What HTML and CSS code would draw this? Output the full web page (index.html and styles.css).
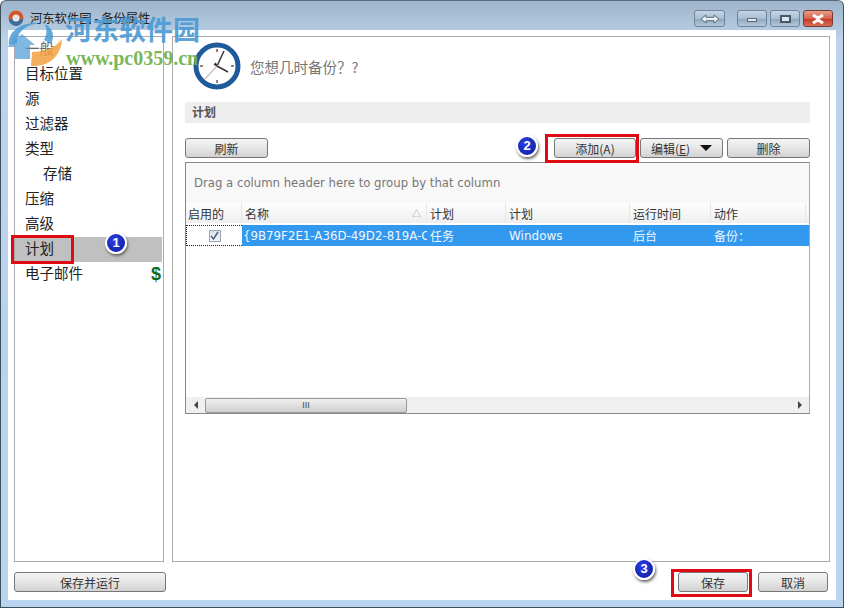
FILE: index.html
```html
<!DOCTYPE html>
<html lang="zh-CN">
<head>
  <meta charset="UTF-8">
  <title>备份属性</title>
  <link rel="stylesheet" href="styles.css">
</head>
<body>
  <div class="window">
    <div class="titlebar">
      <svg class="app-icon" width="16" height="16" viewBox="0 0 16 16">
        <circle cx="8" cy="8" r="7.5" fill="#d8542c"/>
        <path d="M1 9a7 7 0 0 0 14 0z" fill="#3d6f9c"/>
        <circle cx="8" cy="8" r="3.5" fill="#e8e8e8"/>
      </svg>
      <span class="title-text">河东软件园 - 备份属性</span>
      <span class="spacer"></span>
      <span class="cap-btn cap-nav">
        <svg width="20" height="10" viewBox="0 0 20 10"><path d="M1 5l5-4v2.300h8V1l5 4-5 4V6.700H6V9z" fill="#e8eef2" stroke="#5a6c7c"/></svg>
      </span>
      <span class="cap-btn cap-min"><i></i></span>
      <span class="cap-btn cap-max"><i></i></span>
      <span class="cap-btn cap-close">
        <svg width="14" height="10" viewBox="0 0 14 10"><path d="M2 1l5 3 5-3M2 9l5-3 5 3M7 4v2" fill="none" stroke="#fff" stroke-width="3"/></svg>
      </span>
    </div>

    <div class="client">
      <div class="panes">
        <ul class="nav">
          <li class="faded">一般</li>
          <li>目标位置</li>
          <li>源</li>
          <li>过滤器</li>
          <li>类型</li>
          <li class="sub">存储</li>
          <li>压缩</li>
          <li>高级</li>
          <li class="selected">计划</li>
          <li>电子邮件<span class="dollar">$</span></li>
        </ul>

        <div class="content">
          <div class="head">
            <svg class="clock" width="48" height="48" viewBox="0 0 48 48">
              <circle cx="24" cy="24" r="21" fill="#fff" stroke="#1f5a9a" stroke-width="5"/>
              <path d="M24 7v3M24 38v3M7 24h3M38 24h3" stroke="#6b5a55" stroke-width="1.500"/>
              <path d="M22 21l2 3 7-15M21 22l3 2 11 6" stroke="#3c3432" stroke-width="1.500" fill="none"/>
              <path d="M26 22L11 38" stroke="#a08c86" stroke-width="1"/>
            </svg>
            <span class="question">您想几时备份？?</span>
          </div>
          <div class="section">计划</div>

          <div class="toolbar">
            <button class="btn btn-wide">刷新</button>
            <span class="spacer"></span>
            <button class="btn btn-wide">添加(A)</button>
            <button class="btn btn-wide btn-drop"><span>编辑(<u>E</u>)</span><i class="caret"></i></button>
            <button class="btn btn-wide">删除</button>
          </div>

          <div class="grid">
            <div class="group-panel">Drag a column header here to group by that column</div>
            <div class="cols">
              <div class="col">启用的</div>
              <div class="col col-name">名称<span class="sort">△</span></div>
              <div class="col">计划</div>
              <div class="col">计划</div>
              <div class="col">运行时间</div>
              <div class="col">动作</div>
              <div class="col"></div>
            </div>
            <div class="cols row">
              <div class="cell-check"><span class="check">
                <svg width="9" height="9" viewBox="0 0 9 9"><path d="M1 5l2.500 3L8 1" fill="none" stroke="#4a5f8c" stroke-width="1.500"/></svg>
              </span></div>
              <div class="cell cell-name">{9B79F2E1-A36D-49D2-819A-C</div>
              <div class="cell">任务</div>
              <div class="cell">Windows</div>
              <div class="cell">后台</div>
              <div class="cell">备份：</div>
              <div class="cell"></div>
            </div>
            <div class="grid-body"></div>
            <div class="hscroll">
              <span class="arrow arrow-left"></span>
              <div class="track">
                <div class="thumb">III</div>
              </div>
              <span class="arrow arrow-right"></span>
            </div>
          </div>
        </div>
      </div>

      <div class="footer">
        <button class="btn btn-run">保存并运行</button>
        <span class="spacer"></span>
        <button class="btn btn-foot">保存</button>
        <button class="btn btn-foot">取消</button>
      </div>
    </div>
  </div>

  <!-- annotations on top of the screenshot -->
  <div class="mark mark-1"></div>
  <div class="mark mark-2"></div>
  <div class="mark mark-3"></div>
  <div class="badge badge-1">1</div>
  <div class="badge badge-2">2</div>
  <div class="badge badge-3">3</div>

  <!-- watermark -->
  <svg class="wm-logo" width="56" height="46" viewBox="0 0 56 46">
    <path d="M2 24C0 10 16 0 34 2 20 3 10 10 10 22z" fill="#4a9ad4" opacity=".85"/>
    <path d="M0 26l15-13 13 11h-5v14H8V26z" fill="#4a9ad4" opacity=".7"/>
    <path d="M38 3c8 4 10 12 6 20l-7-4c3-5 3-10 1-16z" fill="#4a9ad4" opacity=".85"/>
    <path d="M24 45c16 1 30-8 31-27-6 8-17 13-30 13z" fill="#f2a040" opacity=".85"/>
  </svg>
  <div class="wm-name">河东软件园</div>
  <div class="wm-url">www.pc0359.cn</div>
</body>
</html>
```

FILE: styles.css
```css
* {
  box-sizing: border-box;
}
body {
  margin: 0;
  width: 844px;
  height: 608px;
  overflow: hidden;
  position: relative;
  font-family: "Noto Sans CJK SC", "Liberation Sans", sans-serif;
  color: #222;
}
.spacer {
  flex: 1;
}
.window {
  height: 608px;
  display: flex;
  flex-direction: column;
  background: linear-gradient(#9db4ca, #bcd3ea 40px, #b9d4ee);
  border: 1px solid #3c4e5c;
  border-top-color: #5a6a78;
  border-radius: 6px 6px 0 0;
}
.titlebar {
  height: 29px;
  display: flex;
  align-items: flex-start;
  padding: 9px 10px 0 7px;
}
.app-icon {
  margin-right: 6px;
}
.title-text {
  font-size: 12.300px;
  line-height: 17px;
  color: #222;
}
.cap-btn {
  height: 17px;
  width: 30px;
  display: flex;
  align-items: center;
  justify-content: center;
  margin-left: 3px;
  border: 1px solid #6f8499;
  border-radius: 3px;
  background: linear-gradient(#c5d6e6, #a9bfd3 50%, #8fa7bc 55%, #b4c9dc);
}
.cap-nav {
  width: 31px;
  margin-right: 9px;
}
.cap-min i {
  width: 10px;
  height: 4px;
  margin-top: 3px;
  background: #dfe6ec;
  border: 1px solid #5a6c7c;
}
.cap-max i {
  width: 11px;
  height: 8px;
  background: #dfe6ec;
  border: 2px solid #47586a;
}
.cap-close {
  background: linear-gradient(#e8a08c, #d9604a 50%, #c23d28 55%, #da6e58);
  border-color: #7a3a30;
}
.client {
  flex: 1;
  margin: 0 7px 7px;
  padding: 6px;
  background: #fff;
  display: flex;
  flex-direction: column;
}
.panes {
  height: 526px;
  display: flex;
  gap: 8px;
}
.nav {
  width: 150px;
  flex: none;
  margin: 0;
  padding: 0;
  list-style: none;
  border: 1px solid #aaa;
  font-size: 14.500px;
}
.nav li {
  height: 25px;
  line-height: 22px;
  padding-left: 10px;
  display: flex;
  justify-content: space-between;
}
.nav .sub {
  padding-left: 28px;
}
.nav .selected {
  background: #c0c0c0;
  margin-right: 1px;
}
.nav .faded {
  color: #666;
}
.dollar {
  font: bold 18px "Liberation Sans", sans-serif;
  line-height: 25px;
  color: #0f6b1e;
  margin-right: 2px;
}
.content {
  flex: 1;
  min-width: 0;
  border: 1px solid #aaa;
  padding: 5px 19px 0 12px;
}
.head {
  height: 47px;
  display: flex;
  align-items: center;
  padding-left: 8px;
  gap: 9px;
}
.question {
  font-size: 14.500px;
  color: #777;
  margin-top: 2px;
}
.section {
  margin-top: 13px;
  height: 21px;
  line-height: 20px;
  padding-left: 7px;
  background: #eee;
  font-size: 12px;
  font-weight: bold;
  color: #555;
}
.toolbar {
  margin-top: 15px;
  display: flex;
  gap: 4px;
}
.btn {
  height: 20px;
  padding: 0;
  border: 1px solid #777;
  border-radius: 3px;
  background: linear-gradient(#f4f4f4, #e8e8e8 45%, #d2d2d2);
  font-family: inherit;
  font-size: 12px;
  line-height: 17px;
  color: #333;
}
.btn-wide {
  width: 83px;
}
.toolbar .btn:nth-of-type(2) {
  width: 82px;
}
.btn-drop {
  display: flex;
  align-items: center;
  justify-content: center;
  gap: 10px;
}
.caret {
  width: 0;
  height: 0;
  border-left: 6px solid transparent;
  border-right: 6px solid transparent;
  border-top: 6px solid #111;
}
.grid {
  margin-top: 4px;
  height: 252px;
  display: flex;
  flex-direction: column;
  border: 1px solid #888;
  border-right-color: #aaa;
  overflow: hidden;
}
.group-panel {
  height: 40px;
  padding-left: 8px;
  background: #f8f8f8;
  font: 11.700px/41px "DejaVu Sans", sans-serif;
  color: #777;
}
.cols {
  display: grid;
  grid-template-columns: 56px 185px 79px 124px 81px 95px 4px;
  height: 22px;
  flex: none;
}
.col {
  height: 20px;
  padding-left: 3px;
  font-size: 12px;
  line-height: 21px;
  border-right: 1px solid #e8e8e8;
  background: linear-gradient(#fff, #eee);
  color: #333;
  display: flex;
  justify-content: space-between;
}
.col:first-child {
  padding-left: 2px;
}
.sort {
  margin-right: 5px;
  font-size: 9px;
  color: #999;
}
.row {
  height: 21px;
}
.cell-check {
  display: flex;
  align-items: center;
  justify-content: center;
  border: 1px dotted #222;
  border-right: 0;
}
.check {
  width: 12px;
  height: 12px;
  display: flex;
  align-items: center;
  justify-content: center;
  border: 1px solid #9aa5b2;
  background: linear-gradient(#dde3ea, #f4f6f8);
}
.cell {
  padding-left: 3px;
  background: #3399ee;
  color: #eef6ff;
  font-size: 12px;
  line-height: 22px;
  white-space: nowrap;
  overflow: hidden;
}
.cell-name {
  padding-left: 1px;
  font-family: "DejaVu Sans", sans-serif;
  font-size: 11.800px;
}
.cell:nth-child(4) {
  font-family: "DejaVu Sans", sans-serif;
  font-size: 12px;
}
.grid-body {
  flex: 1;
  background: #fff;
}
.hscroll {
  height: 16px;
  display: flex;
  align-items: center;
  background: #f0f0f0;
}
.arrow {
  width: 19px;
  display: flex;
  justify-content: center;
}
.arrow::before {
  content: "";
  border-top: 4px solid transparent;
  border-bottom: 4px solid transparent;
}
.arrow-left::before {
  border-right: 4px solid #444;
}
.arrow-right::before {
  border-left: 4px solid #444;
}
.track {
  flex: 1;
}
.thumb {
  width: 202px;
  height: 15px;
  border: 1px solid #999;
  border-radius: 2px;
  background: linear-gradient(#f0f0f0, #cfcfcf);
  text-align: center;
  font: 9px/13px "Liberation Sans", sans-serif;
  color: #444;
}
.footer {
  margin-top: 10px;
  padding-right: 2px;
  display: flex;
  gap: 10px;
}
.btn-run {
  width: 152px;
}
.btn-foot {
  width: 70px;
}

/* annotations */
.mark {
  position: absolute;
  border: 3px solid #e00a12;
}
.mark-1 {
  left: 11px;
  top: 235px;
  width: 63px;
  height: 29px;
}
.mark-2 {
  left: 545px;
  top: 134px;
  width: 94px;
  height: 29px;
}
.mark-3 {
  left: 671px;
  top: 569px;
  width: 81px;
  height: 28px;
}
.badge {
  position: absolute;
  width: 22px;
  height: 22px;
  border: 2px solid #fff;
  border-radius: 50%;
  background: radial-gradient(circle at 40% 35%, #2a3ee0, #0c1c9c);
  box-shadow: 1px 2px 3px #666;
  color: #fff;
  font: bold 13px/18px "Liberation Sans", sans-serif;
  text-align: center;
}
.badge-1 {
  left: 105px;
  top: 232px;
}
.badge-2 {
  left: 516px;
  top: 135px;
}
.badge-3 {
  left: 633px;
  top: 558px;
}

/* watermark */
.wm-logo {
  position: absolute;
  left: 7px;
  top: 21px;
}
.wm-name {
  position: absolute;
  left: 65px;
  top: 12px;
  font: bold 27px/34px "Noto Sans CJK SC", sans-serif;
  color: #4a9ad4;
  opacity: .9;
}
.wm-url {
  position: absolute;
  left: 66px;
  top: 46px;
  font: bold 20px/24px "Liberation Serif", serif;
  color: #6cb04a;
  opacity: .9;
}
```
